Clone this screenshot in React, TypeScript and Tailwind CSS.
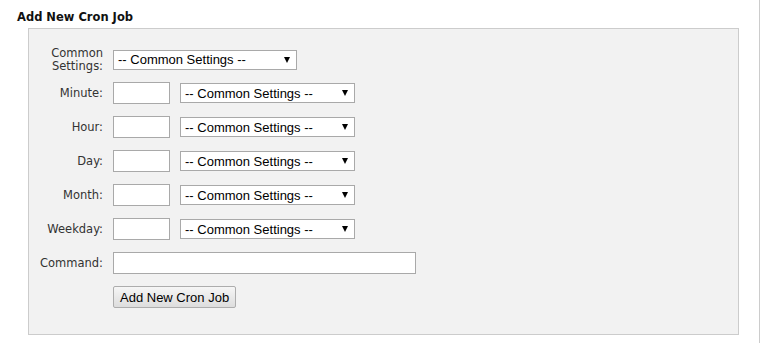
import React from "react";

const labelFont = { fontFamily: '"DejaVu Sans", Verdana, sans-serif' };
const ctrlFont = { fontFamily: '"Liberation Sans", Arial, sans-serif' };

function Select({ w }: { w: string }) {
  return (
    <div
      className={`${w} h-[20px] bg-white border border-[#a9a9a9] flex items-center justify-between pl-[4px] pr-[6px] text-[13px] text-black leading-none`}
      style={ctrlFont}
    >
      <span>-- Common Settings --</span>
      <span className="w-0 h-0 border-l-[3px] border-r-[3px] border-t-[6px] border-l-transparent border-r-transparent border-t-black" />
    </div>
  );
}

function Label({ children }: { children: React.ReactNode }) {
  return (
    <div className="w-[84px] shrink-0 pr-[10px] text-right text-[11.5px] leading-[13px] text-[#333]" style={labelFont}>
      {children}
    </div>
  );
}

function TimeRow({ label }: { label: string }) {
  return (
    <div className="h-[34px] flex items-center">
      <Label>{label}</Label>
      <div className="w-[57px] h-[22px] bg-white border border-[#a9a9a9]" />
      <div className="ml-[10px]">
        <Select w="w-[175px]" />
      </div>
    </div>
  );
}

export default function App() {
  return (
    <div className="relative w-[762px] h-[343px] bg-white overflow-hidden">
      <div className="flex h-full">
        <div className="w-[759px] pl-[17px] pt-[10px]">
          <div className="text-[11.5px] font-bold text-[#111] leading-[14px]" style={labelFont}>
            Add New Cron Job
          </div>
          <div className="mt-[4px] ml-[11px] w-[711px] h-[307px] bg-[#f2f2f2] border border-[#cccccc] pt-[14px]">
            <div className="h-[33px] flex items-center">
              <Label>
                Common
                <br />
                Settings:
              </Label>
              <Select w="w-[184px]" />
            </div>
            <TimeRow label="Minute:" />
            <TimeRow label="Hour:" />
            <TimeRow label="Day:" />
            <TimeRow label="Month:" />
            <TimeRow label="Weekday:" />
            <div className="h-[34px] flex items-center">
              <Label>Command:</Label>
              <div className="w-[303px] h-[22px] bg-white border border-[#a9a9a9]" />
            </div>
            <div className="h-[34px] flex items-center">
              <Label>{""}</Label>
              <button
                className="h-[22px] px-[6px] rounded-[2px] border border-[#adadad] bg-gradient-to-b from-[#f6f6f6] to-[#dddddd] text-[13px] text-black leading-none"
                style={ctrlFont}
              >
                Add New Cron Job
              </button>
            </div>
          </div>
        </div>
        <div className="w-px h-full bg-[#cccccc]" />
      </div>
    </div>
  );
}
